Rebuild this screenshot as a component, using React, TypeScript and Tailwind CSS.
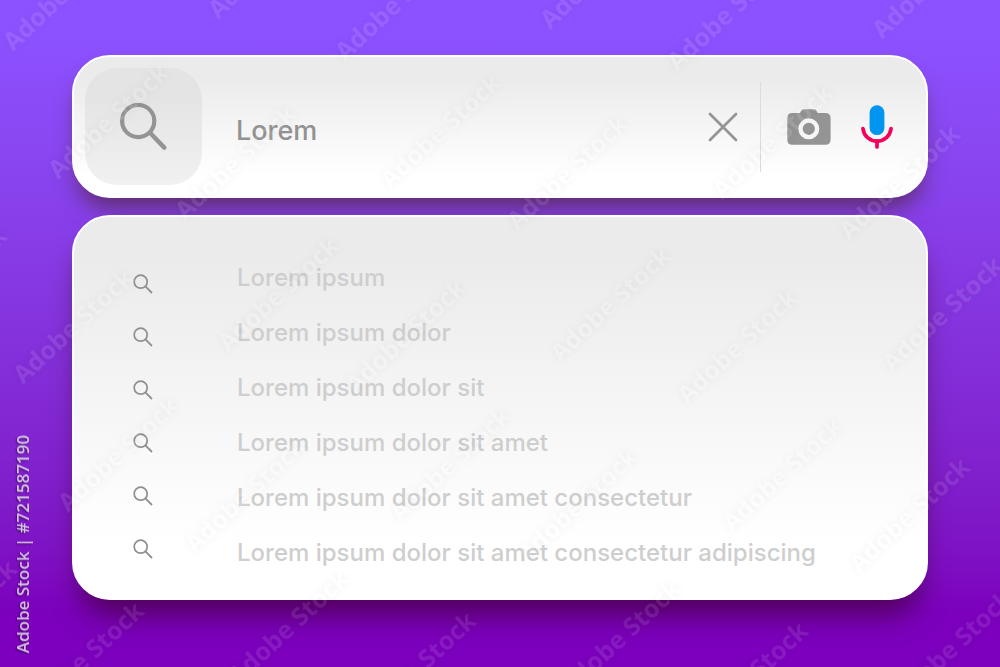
const suggestions = [
  'Lorem ipsum',
  'Lorem ipsum dolor',
  'Lorem ipsum dolor sit',
  'Lorem ipsum dolor sit amet',
  'Lorem ipsum dolor sit amet consectetur',
  'Lorem ipsum dolor sit amet consectetur adipiscing',
];

// Four stamps per cell; cells repeat along two slightly tilted axes.
const cellStamps = [
  [13, 52],
  [218, 20],
  [58, 180],
  [185, 221],
];
const cells = [-1, 0, 1, 2, 3];
const stamps = cells
  .flatMap((row) =>
    cells.flatMap((col) =>
      cellStamps.map(([x, y]) => [x + col * 332 + row * 10, y + col * 10 + row * 333]),
    ),
  )
  .filter(([x, y]) => x > -105 && x < 990 && y > 15 && y < 770);

function Watermark() {
  return (
    <svg aria-hidden="true" className="pointer-events-none absolute inset-0 h-full w-full overflow-hidden">
      <g className="fill-white font-['Open_Sans',sans-serif] text-[25px] font-bold opacity-10 [filter:drop-shadow(0_0_4px_rgb(0_0_0/0.55))]">
        {stamps.map(([x, y]) => (
          <text key={`${x}-${y}`} transform={`translate(${x} ${y}) rotate(-43)`}>
            Adobe Stock
          </text>
        ))}
      </g>
    </svg>
  );
}

function SearchIcon() {
  return (
    <svg aria-hidden="true" viewBox="0 0 47 47" className="size-[47px]" fill="none" stroke="currentColor">
      <circle cx="18.2" cy="18" r="16.1" strokeWidth="4.2" />
      <path d="M30 29.8 44.3 44.6" strokeWidth="4.4" strokeLinecap="round" />
    </svg>
  );
}

function SmallSearchIcon() {
  return (
    <svg aria-hidden="true" viewBox="0 0 20 20" className="size-5" fill="none" stroke="currentColor">
      <circle cx="7.7" cy="7.7" r="6.5" strokeWidth="1.7" />
      <path d="M12.4 12.4 19 19" strokeWidth="1.8" />
    </svg>
  );
}

function CloseIcon() {
  return (
    <svg aria-hidden="true" viewBox="0 0 30 30" className="size-[30px]" fill="none" stroke="currentColor">
      <path d="M2 2 28 28M28 2 2 28" strokeWidth="2.7" strokeLinecap="round" />
    </svg>
  );
}

function CameraIcon() {
  return (
    <svg aria-hidden="true" viewBox="0 0 44 36" className="h-9 w-11">
      <path
        fill="currentColor"
        d="M5.3 3.9H12.6Q13.5 3.9 13.6 2.8 14 .3 16.4.3H27.2Q29.6.3 30 2.8 30.1 3.9 31 3.9H38.3Q43.6 3.9 43.6 9.2V30.5Q43.6 35.8 38.3 35.8H5.3Q.3 35.8.3 30.5V9.2Q.3 3.9 5.3 3.9Z"
      />
      <circle cx="21.8" cy="19.8" r="8.3" fill="none" stroke="#f6f6f6" strokeWidth="4.4" />
    </svg>
  );
}

function MicIcon() {
  return (
    <svg aria-hidden="true" viewBox="0 0 32 44" className="h-11 w-8" fill="none">
      <rect x="8.6" y=".3" width="14.8" height="29.8" rx="7.4" fill="#0095f0" />
      <path
        d="M2 23.7C2.9 31 8.7 36.2 16 36.2S29.1 31 30 23.7"
        stroke="#f5005a"
        strokeWidth="3.7"
        strokeLinecap="round"
      />
      <path d="M16 36.2V41.9" stroke="#f5005a" strokeWidth="3.7" strokeLinecap="round" />
    </svg>
  );
}

export default function App() {
  return (
    <main className="relative flex min-h-screen flex-col gap-[17px] overflow-hidden bg-linear-to-b from-[#8c52ff] from-5% to-[#7c00bd] to-92% px-[72px] py-[55px] font-['Inter',sans-serif]">
      <form
        role="search"
        onSubmit={(event) => event.preventDefault()}
        className="flex items-center rounded-[38px] border-2 border-white bg-linear-to-b from-[#ebebeb] from-15% to-white to-85% p-[11px] text-[#949494] shadow-[0_16px_22px_-6px_rgb(70_35_40/0.65)]"
      >
        <button
          type="submit"
          aria-label="Search"
          className="flex size-[117px] shrink-0 items-center justify-center rounded-[32px] bg-linear-to-b from-[#e4e4e4] from-25% to-[#f1f1f1]"
        >
          <SearchIcon />
        </button>
        <input
          type="text"
          aria-label="Search text"
          defaultValue="Lorem"
          className="ml-[34px] min-w-0 flex-1 bg-transparent pt-[10px] text-[27px] font-medium text-[#929292] outline-none"
        />
        <button type="button" aria-label="Clear" className="shrink-0">
          <CloseIcon />
        </button>
        <span aria-hidden="true" className="mx-[22px] h-[90px] w-px shrink-0 bg-[#dcdcdc]" />
        <div className="mr-[22px] flex shrink-0 items-center gap-[30px] pl-1">
          <button type="button" aria-label="Search by image">
            <CameraIcon />
          </button>
          <button type="button" aria-label="Search by voice">
            <MicIcon />
          </button>
        </div>
      </form>

      <section
        aria-label="Suggestions"
        className="flex gap-[84px] rounded-[38px] border-2 border-white bg-linear-to-b from-[#ebebeb] from-10% to-white to-85% pt-[33px] pr-10 pb-[18px] pl-[59px] shadow-[0_22px_28px_-8px_rgb(50_0_20/0.6)]"
      >
        <div aria-hidden="true" className="flex flex-col pt-[7px] text-[#8f8f8f]">
          {suggestions.map((text) => (
            <span key={text} className="flex h-[53px] items-center">
              <SmallSearchIcon />
            </span>
          ))}
        </div>
        <ul className="min-w-0 flex-1 text-[24px] font-medium text-[#cecece]">
          {suggestions.map((text) => (
            <li key={text} className="flex h-[55px] items-center">
              <a href="#">{text}</a>
            </li>
          ))}
        </ul>
      </section>

      <Watermark />
      <p className="absolute bottom-[14px] left-[10px] rotate-180 font-['Open_Sans',sans-serif] text-[17px] leading-[26px] font-semibold text-white/75 [text-shadow:-1px_-1px_2px_rgb(0_0_0/0.5)] [writing-mode:vertical-rl]">
        Adobe Stock | #721587190
      </p>
    </main>
  );
}
